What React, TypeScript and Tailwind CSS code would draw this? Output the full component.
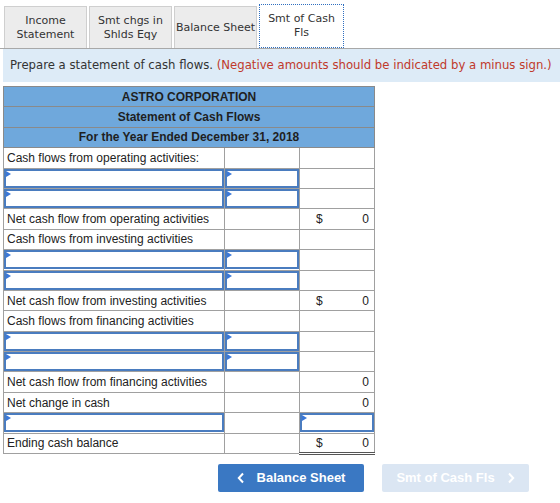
import React from 'react'

type Row =
  | { kind: 'label'; text: string }
  | { kind: 'input' }
  | { kind: 'total'; text: string; dollar?: boolean; dark?: boolean }
  | { kind: 'cashInput' }
  | { kind: 'ending'; text: string }

const rows: Row[] = [
  { kind: 'label', text: 'Cash flows from operating activities:' },
  { kind: 'input' },
  { kind: 'input' },
  { kind: 'total', text: 'Net cash flow from operating activities', dollar: true, dark: true },
  { kind: 'label', text: 'Cash flows from investing activities' },
  { kind: 'input' },
  { kind: 'input' },
  { kind: 'total', text: 'Net cash flow from investing activities', dollar: true, dark: true },
  { kind: 'label', text: 'Cash flows from financing activities' },
  { kind: 'input' },
  { kind: 'input' },
  { kind: 'total', text: 'Net cash flow from financing activities' },
  { kind: 'total', text: 'Net change in cash', dark: true },
  { kind: 'cashInput' },
  { kind: 'ending', text: 'Ending cash balance' },
]

function InputBox() {
  return (
    <div className="relative box-border h-[19px] w-full border-2 border-[#4a7cbf] bg-white">
      <span className="absolute left-0 top-0 h-0 w-0 border-y-[3px] border-l-[5px] border-y-transparent border-l-[#3b78d8]" />
    </div>
  )
}

function Tab({ label, active }: { label: React.ReactNode; active?: boolean }) {
  return (
    <div
      className={
        active
          ? 'flex h-[44px] w-[85px] items-center justify-center border border-dotted border-[#2f6fc0] bg-white text-center leading-[14px]'
          : 'flex h-[42px] w-[83px] items-center justify-center border border-b-0 border-[#cfcfcf] bg-[#ececec] text-center leading-[14px]'
      }
    >
      {label}
    </div>
  )
}

export default function App() {
  return (
    <div className="h-[503px] w-[560px] bg-white text-[#333]">
      {/* tabs */}
      <div className="flex items-end gap-[2px] border-b border-[#a8a8a8] pl-[4px] pt-[4px] text-[11px]" style={{ fontFamily: "'DejaVu Sans', Verdana, sans-serif" }}>
        <Tab label={<>Income<br />Statement</>} />
        <Tab label={<>Smt chgs in<br />Shlds Eqy</>} />
        <Tab label="Balance Sheet" />
        <Tab label={<>Smt of Cash<br />Fls</>} active />
      </div>

      {/* instructions */}
      <div className="ml-[3px] h-[33px] whitespace-nowrap bg-[#ddebf7] pl-[7px] text-[11.7px] leading-[33px] text-[#333]" style={{ fontFamily: "'DejaVu Sans', Verdana, sans-serif" }}>
        Prepare a statement of cash flows. <span className="text-[#c0392b]">(Negative amounts should be indicated by a minus sign.)</span>
      </div>

      {/* statement */}
      <table className="ml-[3px] mt-[4px] w-[371px] table-fixed border-collapse text-[12px] text-[#222]" style={{ fontFamily: "'Liberation Sans', Arial, sans-serif" }}>
        <colgroup>
          <col className="w-[221px]" />
          <col className="w-[75px]" />
          <col className="w-[75px]" />
        </colgroup>
        <thead>
          {['ASTRO CORPORATION', 'Statement of Cash Flows', 'For the Year Ended December 31, 2018'].map((t) => (
            <tr key={t} className="h-[20.4px]">
              <th colSpan={3} className="border border-[#8a8a8a] bg-[#6fa8dc] p-0 text-center font-bold text-[#1f1f1f]">
                {t}
              </th>
            </tr>
          ))}
        </thead>
        <tbody>
          {rows.map((r, i) => {
            if (r.kind === 'input') {
              return (
                <tr key={i} className="h-[20.4px]">
                  <td className="border border-[#a0a0a0] p-0"><InputBox /></td>
                  <td className="border border-[#a0a0a0] p-0"><InputBox /></td>
                  <td className="border border-[#a0a0a0] p-0" />
                </tr>
              )
            }
            if (r.kind === 'cashInput') {
              return (
                <tr key={i} className="h-[20.4px]">
                  <td className="border border-[#a0a0a0] p-0"><InputBox /></td>
                  <td className="border border-[#a0a0a0] p-0" />
                  <td className="border border-[#a0a0a0] p-0"><InputBox /></td>
                </tr>
              )
            }
            if (r.kind === 'label') {
              return (
                <tr key={i} className="h-[20.4px]">
                  <td className="border border-[#a0a0a0] px-[3px] py-0">{r.text}</td>
                  <td className="border border-[#a0a0a0] p-0" />
                  <td className="border border-[#a0a0a0] p-0" />
                </tr>
              )
            }
            const ending = r.kind === 'ending'
            const dollar = ending || (r.kind === 'total' && r.dollar)
            const dark = r.kind === 'total' && r.dark
            return (
              <tr key={i} className="h-[20.4px]">
                <td className="border border-[#a0a0a0] px-[3px] py-0">{r.text}</td>
                <td className="border border-[#a0a0a0] p-0" />
                <td
                  className={
                    'border border-[#a0a0a0] px-[5px] py-0 ' +
                    (dark ? 'border-t-[#222] ' : '') +
                    (ending ? 'border-b-[3px] border-b-[#555] border-double' : '')
                  }
                >
                  <div className="flex items-center justify-between">
                    <span className="pl-[11px]">{dollar ? '$' : ''}</span>
                    <span>0</span>
                  </div>
                </td>
              </tr>
            )
          })}
        </tbody>
      </table>

      {/* navigation */}
      <div className="mt-[9px] flex gap-[18px] pl-[218px] text-[13px] font-bold" style={{ fontFamily: "'Liberation Sans', Arial, sans-serif" }}>
        <button className="flex h-[28px] w-[146px] items-center justify-center gap-[12px] rounded-[2px] bg-[#3a78c3] text-white">
          <svg width="8" height="12" viewBox="0 0 8 12" fill="none" stroke="white" strokeWidth="2"><path d="M6 1.5 1.8 6 6 10.5" /></svg>
          Balance Sheet
        </button>
        <button className="flex h-[28px] w-[147px] items-center justify-center gap-[12px] rounded-[2px] bg-[#dbe6f3] text-white">
          Smt of Cash Fls
          <svg width="8" height="12" viewBox="0 0 8 12" fill="none" stroke="white" strokeWidth="2"><path d="M2 1.5 6.2 6 2 10.5" /></svg>
        </button>
      </div>
    </div>
  )
}
